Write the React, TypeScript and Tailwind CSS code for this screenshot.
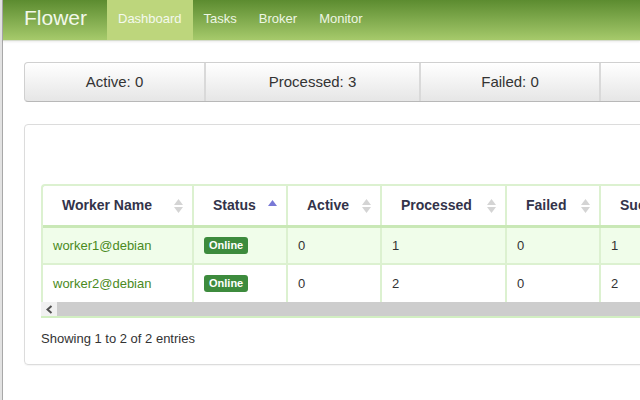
const stats = [
  { label: "Active: 0", width: "w-[179px]" },
  { label: "Processed: 3", width: "w-[215px]" },
  { label: "Failed: 0", width: "w-[180px]" },
  { label: "Succeeded: 3", width: "w-[200px]" },
];

const columns = [
  { name: "Worker Name", width: "w-[149px]", sort: "both" },
  { name: "Status", width: "w-[94px]", sort: "asc" },
  { name: "Active", width: "w-[94px]", sort: "both" },
  { name: "Processed", width: "w-[125px]", sort: "both" },
  { name: "Failed", width: "w-[94px]", sort: "both" },
  { name: "Succeeded", width: "w-[110px]", sort: "both" },
];

const workers = [
  { name: "worker1@debian", active: 0, processed: 1, failed: 0, succeeded: 1 },
  { name: "worker2@debian", active: 0, processed: 2, failed: 0, succeeded: 2 },
];

function SortIcon({ kind }: { kind: string }) {
  if (kind === "asc") {
    return (
      <svg width="9" height="14" viewBox="0 0 9 14" className="shrink-0">
        <polygon points="0,7 4.5,1 9,7" fill="#7878d6" />
      </svg>
    );
  }
  return (
    <svg width="9" height="16" viewBox="0 0 9 16" className="shrink-0">
      <polygon points="0,7 4.5,1 9,7" fill="#d4d4d4" />
      <polygon points="0,9 9,9 4.5,15" fill="#d4d4d4" />
    </svg>
  );
}

export default function App() {
  return (
    <div className="flex h-[400px] w-[640px] overflow-hidden bg-white font-['Liberation_Sans',Arial,sans-serif]">
      {/* window edge */}
      <div className="w-[3px] shrink-0 border-r border-[#a8a8a8] bg-[#e2e2e2]" />

      <div className="min-w-0 flex-1">
        {/* Navbar */}
        <div className="flex h-[41px] items-stretch border-b border-[#d6dccd] bg-gradient-to-b from-[#5c8c30] to-[#a6ca6b] shadow-[0_1px_2px_rgba(0,0,0,0.08)]">
          <div className="flex w-[104px] shrink-0 items-center pl-[21px] pb-[4px] text-[21px] text-[#f2f8ea]">
            Flower
          </div>
          <div className="flex items-center bg-[#bdd67c] px-[11px] pb-[3px] text-[13px] text-[#f4f9ee]">
            Dashboard
          </div>
          <div className="flex items-center px-[11px] pb-[3px] text-[13px] text-[#eef6e4]">Tasks</div>
          <div className="flex items-center px-[11px] pb-[3px] text-[13px] text-[#eef6e4]">Broker</div>
          <div className="flex items-center px-[11px] pb-[3px] text-[13px] text-[#eef6e4]">Monitor</div>
        </div>

        <div className="pl-[21px] pt-[21px]">
          {/* Stats bar */}
          <div className="flex h-[40px] w-[720px] overflow-hidden rounded-[4px] border border-[#d0d0d0] border-b-[#b8b8b8] bg-gradient-to-b from-[#ffffff] to-[#e6e6e6]">
            {stats.map((s, i) => (
              <div
                key={s.label}
                className={`flex shrink-0 items-center justify-center text-[15px] text-[#333] ${s.width} ${
                  i > 0 ? "border-l-2 border-[#d9d9d9]" : ""
                }`}
              >
                {s.label}
              </div>
            ))}
          </div>

          {/* Workers panel */}
          <div className="mt-[22px] h-[241px] w-[720px] rounded-[4px] border border-[#dcdcdc] pl-[16px] pt-[59px] shadow-[0_1px_1px_rgba(0,0,0,0.04)]">
            <div className="w-[700px]">
              <div className="overflow-hidden rounded-tl-[4px] border-l-2 border-t-2 border-[#dcf1d0]">
                {/* header */}
                <div className="flex h-[42px] border-b-[3px] border-[#c9e8b6]">
                  {columns.map((c, i) => (
                    <div
                      key={c.name}
                      className={`flex shrink-0 items-center justify-between pl-[19px] pr-[9px] text-[14px] font-bold text-[#33334a] ${c.width} ${
                        i > 0 ? "border-l-2 border-[#dcf1d0]" : ""
                      }`}
                    >
                      <span className="whitespace-nowrap">{c.name}</span>
                      <SortIcon kind={c.sort} />
                    </div>
                  ))}
                </div>

                {/* rows */}
                {workers.map((w, r) => (
                  <div
                    key={w.name}
                    className={`flex h-[37px] text-[13px] text-[#333] ${
                      r === 0 ? "border-b-2 border-[#dcf1d0] bg-[#f0fdea]" : "h-[35px] bg-white"
                    }`}
                  >
                    <div className="flex w-[149px] shrink-0 items-center pl-[10px] text-[#4a8a22]">{w.name}</div>
                    <div className="flex w-[94px] shrink-0 items-center border-l-2 border-[#dcf1d0] pl-[10px]">
                      <span className="rounded-[3px] bg-[#3d8b3d] px-[5px] py-[2px] text-[11px] font-bold leading-[13px] text-white">
                        Online
                      </span>
                    </div>
                    <div className="flex w-[94px] shrink-0 items-center border-l-2 border-[#dcf1d0] pl-[10px]">{w.active}</div>
                    <div className="flex w-[125px] shrink-0 items-center border-l-2 border-[#dcf1d0] pl-[10px]">{w.processed}</div>
                    <div className="flex w-[94px] shrink-0 items-center border-l-2 border-[#dcf1d0] pl-[10px]">{w.failed}</div>
                    <div className="flex w-[110px] shrink-0 items-center border-l-2 border-[#dcf1d0] pl-[10px]">{w.succeeded}</div>
                  </div>
                ))}
              </div>

              {/* horizontal scrollbar */}
              <div className="flex h-[16px] border-b-2 border-[#d2efc2] bg-[#cdcdcd]">
                <div className="flex w-[16px] items-center justify-center bg-[#f1f1f1]">
                  <svg width="7" height="9" viewBox="0 0 7 9">
                    <polyline points="5.5,1 1.5,4.5 5.5,8" fill="none" stroke="#505050" strokeWidth="2" />
                  </svg>
                </div>
              </div>
            </div>

            <div className="mt-[11px] text-[13px] text-[#333]">Showing 1 to 2 of 2 entries</div>
          </div>
        </div>
      </div>
    </div>
  );
}
